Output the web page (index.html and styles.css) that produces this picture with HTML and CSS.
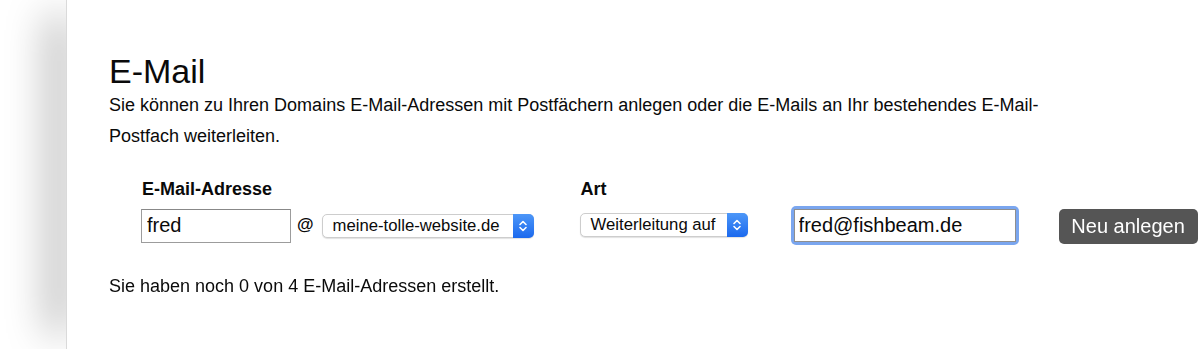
FILE: index.html
```html
<!DOCTYPE html>
<html lang="de">
<head>
    <meta charset="UTF-8">
    <meta name="viewport" content="width=device-width, initial-scale=1.0">
    <title>E-Mail</title>
    <link rel="stylesheet" href="styles.css">
</head>
<body>
    <div class="panel">
        <h1 class="title">E-Mail</h1>
        <p class="intro">Sie können zu Ihren Domains E-Mail-Adressen mit Postfächern anlegen oder die E-Mails an Ihr bestehendes E-Mail-Postfach weiterleiten.</p>

        <div class="form">
            <div class="field field-address">
                <span class="field-label">E-Mail-Adresse</span>
                <div class="field-row">
                    <input class="text-input local-part" type="text" value="fred">
                    <span class="at">@</span>
                    <div class="select select-domain">
                        <span class="select-text">meine-tolle-website.de</span>
                        <span class="stepper">
                            <svg width="10" height="14" viewBox="0 0 10 14">
                                <path d="M2 5.5 L5 2.5 L8 5.5 M2 8.5 L5 11.5 L8 8.5" fill="none" stroke="#fff" stroke-width="1.6" stroke-linecap="round" stroke-linejoin="round"/>
                            </svg>
                        </span>
                    </div>
                </div>
            </div>

            <div class="field field-type">
                <span class="field-label">Art</span>
                <div class="field-row">
                    <div class="select select-type">
                        <span class="select-text">Weiterleitung auf</span>
                        <span class="stepper">
                            <svg width="10" height="14" viewBox="0 0 10 14">
                                <path d="M2 5.5 L5 2.5 L8 5.5 M2 8.5 L5 11.5 L8 8.5" fill="none" stroke="#fff" stroke-width="1.6" stroke-linecap="round" stroke-linejoin="round"/>
                            </svg>
                        </span>
                    </div>
                </div>
            </div>

            <div class="field field-target">
                <span class="field-label"></span>
                <div class="field-row">
                    <span class="focus-ring">
                        <input class="text-input target-input" type="text" value="fred@fishbeam.de">
                    </span>
                </div>
            </div>

            <div class="field field-submit">
                <span class="field-label"></span>
                <div class="field-row">
                    <button class="create-btn">Neu anlegen</button>
                </div>
            </div>
        </div>

        <p class="counter">Sie haben noch 0 von 4 E-Mail-Adressen erstellt.</p>
    </div>

    <script>
        // put the caret at the end of the forwarding address
        const target = document.querySelector('.target-input');
        target.focus();
        target.setSelectionRange(target.value.length, target.value.length);
    </script>
</body>
</html>
```

FILE: styles.css
```css
html {
    background-color: #fff;
}

html,
body {
    margin: 0;
    padding: 0;
    overflow: hidden;
}

body {
    font-family: "Liberation Sans", Arial, sans-serif;
    color: #0a0a0a;
    height: 349px;
}

.panel {
    position: relative;
    margin-left: 66px;
    height: 349px;
    padding: 52px 0 0 42px;
    box-sizing: border-box;
    background-color: #fff;
    border-left: 1px solid #dadada;
}

/* the sheet's shadow, fading out at top and bottom */
.panel::before {
    content: "";
    position: absolute;
    top: 16px;
    bottom: 16px;
    left: 0;
    width: 20px;
    z-index: -1;
    box-shadow: -18px 0 40px rgba(0, 0, 0, 0.36);
}

.title {
    margin: 0;
    font-size: 34px;
    font-weight: normal;
    line-height: 38px;
}

.intro {
    margin: 0;
    width: 960px;
    font-size: 18px;
    line-height: 31px;
}

.form {
    display: flex;
    align-items: flex-end;
    margin: 27px 0 0 32px;
}

.field {
    display: flex;
    flex-direction: column;
}

.field-label {
    display: block;
    height: 20px;
    padding-left: 1px;
    margin-bottom: 6px;
    font-size: 18px;
    font-weight: bold;
    line-height: 20px;
}

.field-row {
    display: flex;
    align-items: center;
    height: 40px;
}

.field-type {
    margin-left: 46px;
}

.field-target {
    margin-left: 43px;
}

.field-submit {
    margin-left: 40px;
}

.text-input {
    height: 34px;
    padding: 0 5px;
    box-sizing: border-box;
    border: 1px solid #9c9c9c;
    border-top-color: #888;
    border-radius: 0;
    font-family: "Liberation Sans", Arial, sans-serif;
    font-size: 20px;
    color: #0a0a0a;
    outline: none;
}

.local-part {
    width: 150px;
    margin-top: 1px;
}

.at {
    margin: 0 8px 0 6px;
    font-size: 17px;
    font-weight: bold;
}

.select {
    display: flex;
    align-items: center;
    height: 24px;
    box-sizing: border-box;
    border: 1px solid #cdcdcd;
    border-radius: 5px;
    box-shadow: 0 1px 1px rgba(0, 0, 0, 0.12);
    background-color: #fff;
    font-size: 16.7px;
}

.select-text {
    flex: 1;
    padding-left: 10px;
    white-space: nowrap;
}

.select-domain {
    width: 212px;
    margin-top: 2px;
}

.select-type {
    width: 168px;
}

.stepper {
    display: flex;
    align-items: center;
    justify-content: center;
    width: 21px;
    height: 24px;
    margin: -1px -1px -1px 0;
    border-radius: 0 5px 5px 0;
    background: linear-gradient(#4d97f8, #1b69ee);
}

.focus-ring {
    display: inline-block;
    padding: 3px;
    border-radius: 5px;
    background-color: #7aa6ef;
}

.target-input {
    display: block;
    width: 222px;
    height: 33px;
    padding-left: 4px;
    border-color: #8f8f8f;
}

.create-btn {
    width: 139px;
    height: 35px;
    margin-top: 2px;
    border: none;
    border-radius: 5px;
    background-color: #555;
    color: #fff;
    font-family: "Liberation Sans", Arial, sans-serif;
    font-size: 20px;
    cursor: pointer;
}

.counter {
    margin: 31px 0 0;
    font-size: 18px;
    line-height: 20px;
}
```
